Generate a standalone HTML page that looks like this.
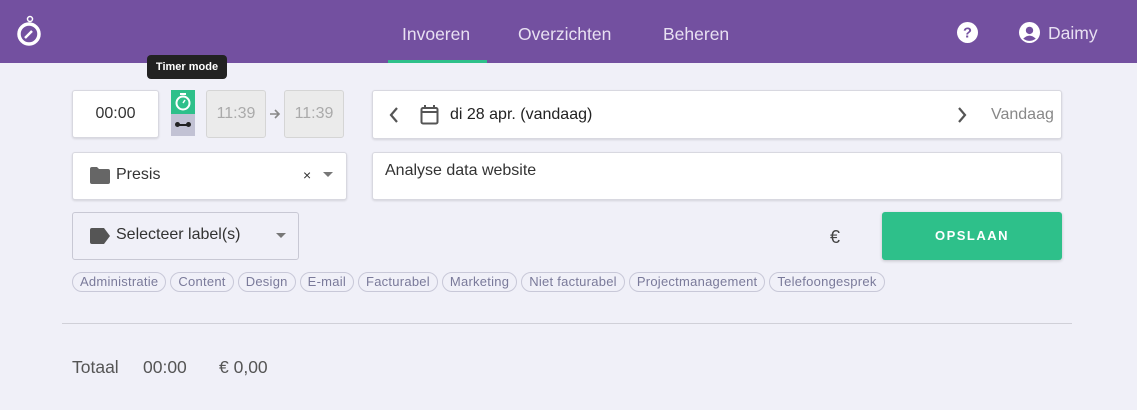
<!DOCTYPE html>
<html><head><style>
*{box-sizing:border-box;margin:0;padding:0}
body{width:1137px;height:410px;background:#f0f0f8;font-family:"Liberation Sans",sans-serif;position:relative;overflow:hidden;color:#333}
.hdr{position:absolute;left:0;top:0;width:1137px;height:63px;background:#7350a0}
.a{position:absolute}
.nav{color:#e8e0f2;font-size:17.5px;top:24px}
.box{position:absolute;background:#fff;border:1px solid #d8d8e0;border-radius:3px;box-shadow:0 1px 2px rgba(0,0,0,.12)}
.dis{position:absolute;background:#ebebeb;border:1px solid #d5d5d5;border-radius:3px;color:#aaa;font-size:16px;text-align:center;line-height:46px}
.tag{display:inline-block;border:1px solid #c8c8d8;border-radius:10px;padding:0 7px;height:20px;line-height:18px;font-size:13px;color:#7a7a9a;margin-right:4px;letter-spacing:.25px}
</style></head><body>
<div class="hdr"></div>
<svg class="a" style="left:15px;top:15px" width="28" height="32" viewBox="0 0 28 32"><circle cx="14" cy="19" r="10" fill="none" stroke="#fff" stroke-width="3.5"/><circle cx="15" cy="4" r="2.5" fill="none" stroke="#fff" stroke-width="1.5"/><line x1="10" y1="23" x2="17" y2="16" stroke="#fff" stroke-width="2.5"/></svg>
<div class="a nav" style="left:402px">Invoeren</div>
<div class="a" style="left:388px;top:60px;width:99px;height:3px;background:#2ec08a"></div>
<div class="a nav" style="left:518px">Overzichten</div>
<div class="a nav" style="left:663px">Beheren</div>
<svg class="a" style="left:957px;top:22px" width="21" height="21" viewBox="0 0 20 20"><circle cx="10" cy="10" r="10" fill="#fff"/><text x="10" y="15" font-size="14" font-weight="bold" text-anchor="middle" fill="#7350a0" font-family="Liberation Sans">?</text></svg>
<svg class="a" style="left:1019px;top:22px" width="21" height="21" viewBox="0 0 20 20"><circle cx="10" cy="10" r="10" fill="#fff"/><circle cx="10" cy="8" r="3.5" fill="#7350a0"/><path d="M4 16 Q10 10 16 16 Q10 20 4 16Z" fill="#7350a0"/></svg>
<div class="a nav" style="left:1048px;top:23px">Daimy</div>
<div class="a" style="left:147px;top:55px;width:80px;height:24px;background:#222;border-radius:4px;color:#fff;font-size:11px;font-weight:bold;text-align:center;line-height:24px">Timer mode</div>
<div class="box" style="left:72px;top:90px;width:87px;height:48px;font-size:16px;text-align:center;line-height:46px">00:00</div>
<div class="a" style="left:171px;top:90px;width:24px;height:24px;background:#2ec08a"></div>
<svg class="a" style="left:174px;top:92px" width="18" height="20" viewBox="0 0 18 20"><circle cx="9" cy="11" r="6.5" fill="none" stroke="#fff" stroke-width="2"/><line x1="6" y1="2" x2="12" y2="2" stroke="#fff" stroke-width="2"/><line x1="9" y1="11" x2="11" y2="8" stroke="#fff" stroke-width="1.5"/></svg>
<div class="a" style="left:171px;top:114px;width:24px;height:22px;background:#c2c2d4"></div>
<div class="a" style="left:176px;top:124px;width:14px;height:2px;background:#222"></div>
<div class="a" style="left:175px;top:122px;width:5px;height:5px;border-radius:50%;background:#222"></div>
<div class="a" style="left:186px;top:122px;width:5px;height:5px;border-radius:50%;background:#222"></div>
<div class="dis" style="left:206px;top:90px;width:60px;height:48px">11:39</div>
<svg class="a" style="left:269px;top:109px" width="12" height="10" viewBox="0 0 12 10"><path d="M1 5H10M6 1L10 5L6 9" fill="none" stroke="#888" stroke-width="1.6"/></svg>
<div class="dis" style="left:284px;top:90px;width:60px;height:48px">11:39</div>
<div class="box" style="left:372px;top:90px;width:690px;height:49px"></div>
<svg class="a" style="left:389px;top:107px" width="10" height="16" viewBox="0 0 10 16"><path d="M8 1L2 8L8 15" fill="none" stroke="#555" stroke-width="2.2"/></svg>
<svg class="a" style="left:420px;top:105px" width="19" height="20" viewBox="0 0 19 20"><rect x="1.5" y="3" width="16" height="15.5" rx="1.5" fill="none" stroke="#555" stroke-width="2"/><line x1="1.5" y1="7" x2="17.5" y2="7" stroke="#555" stroke-width="2"/><line x1="5" y1="0" x2="5" y2="4" stroke="#555" stroke-width="2"/><line x1="14" y1="0" x2="14" y2="4" stroke="#555" stroke-width="2"/></svg>
<div class="a" style="left:450px;top:106px;font-size:16px;color:#222">di 28 apr. (vandaag)</div>
<svg class="a" style="left:957px;top:107px" width="10" height="16" viewBox="0 0 10 16"><path d="M2 1L8 8L2 15" fill="none" stroke="#555" stroke-width="2.2"/></svg>
<div class="a" style="left:991px;top:106px;font-size:16px;color:#888">Vandaag</div>
<div class="box" style="left:72px;top:152px;width:275px;height:48px"></div>
<svg class="a" style="left:90px;top:167px" width="20" height="17" viewBox="0 0 20 17"><path d="M0 2Q0 0 2 0H7L9 2H18Q20 2 20 4V15Q20 17 18 17H2Q0 17 0 15Z" fill="#666"/></svg>
<div class="a" style="left:116px;top:166px;font-size:16px;color:#333">Presis</div>
<div class="a" style="left:303px;top:167px;font-size:14px;color:#333">×</div>
<div class="a" style="left:323px;top:172px;border:5px solid transparent;border-top:5px solid #777"></div>
<div class="box" style="left:372px;top:152px;width:690px;height:48px"></div>
<div class="a" style="left:385px;top:162px;font-size:16px;color:#333">Analyse data website</div>
<div class="a" style="left:72px;top:212px;width:227px;height:48px;border:1px solid #c8c8d4;border-radius:3px;background:#f0f0f8"></div>
<svg class="a" style="left:90px;top:228px" width="20" height="16" viewBox="0 0 20 16"><path d="M2 0H14L20 8L14 16H2Q0 16 0 14V2Q0 0 2 0Z" fill="#555"/></svg>
<div class="a" style="left:116px;top:226px;font-size:16px;color:#333">Selecteer label(s)</div>
<div class="a" style="left:276px;top:233px;border:5px solid transparent;border-top:5px solid #777"></div>
<div class="a" style="left:830px;top:227px;font-size:18px;color:#444">€</div>
<div class="a" style="left:882px;top:212px;width:180px;height:48px;background:#2ec08a;border-radius:3px;box-shadow:0 1px 3px rgba(0,0,0,.2);color:#fff;font-size:13px;font-weight:bold;letter-spacing:1.5px;text-align:center;line-height:48px">OPSLAAN</div>
<div class="a" style="left:72px;top:272px;white-space:nowrap"><span class="tag">Administratie</span><span class="tag">Content</span><span class="tag">Design</span><span class="tag">E-mail</span><span class="tag">Facturabel</span><span class="tag">Marketing</span><span class="tag">Niet facturabel</span><span class="tag">Projectmanagement</span><span class="tag">Telefoongesprek</span></div>
<div class="a" style="left:62px;top:323px;width:1010px;height:1px;background:#d0d0d8"></div>
<div class="a" style="left:72px;top:357px;font-size:17.5px;color:#555">Totaal</div>
<div class="a" style="left:143px;top:357px;font-size:17.5px;color:#555">00:00</div>
<div class="a" style="left:219px;top:357px;font-size:17.5px;color:#555">€ 0,00</div>
</body></html>
